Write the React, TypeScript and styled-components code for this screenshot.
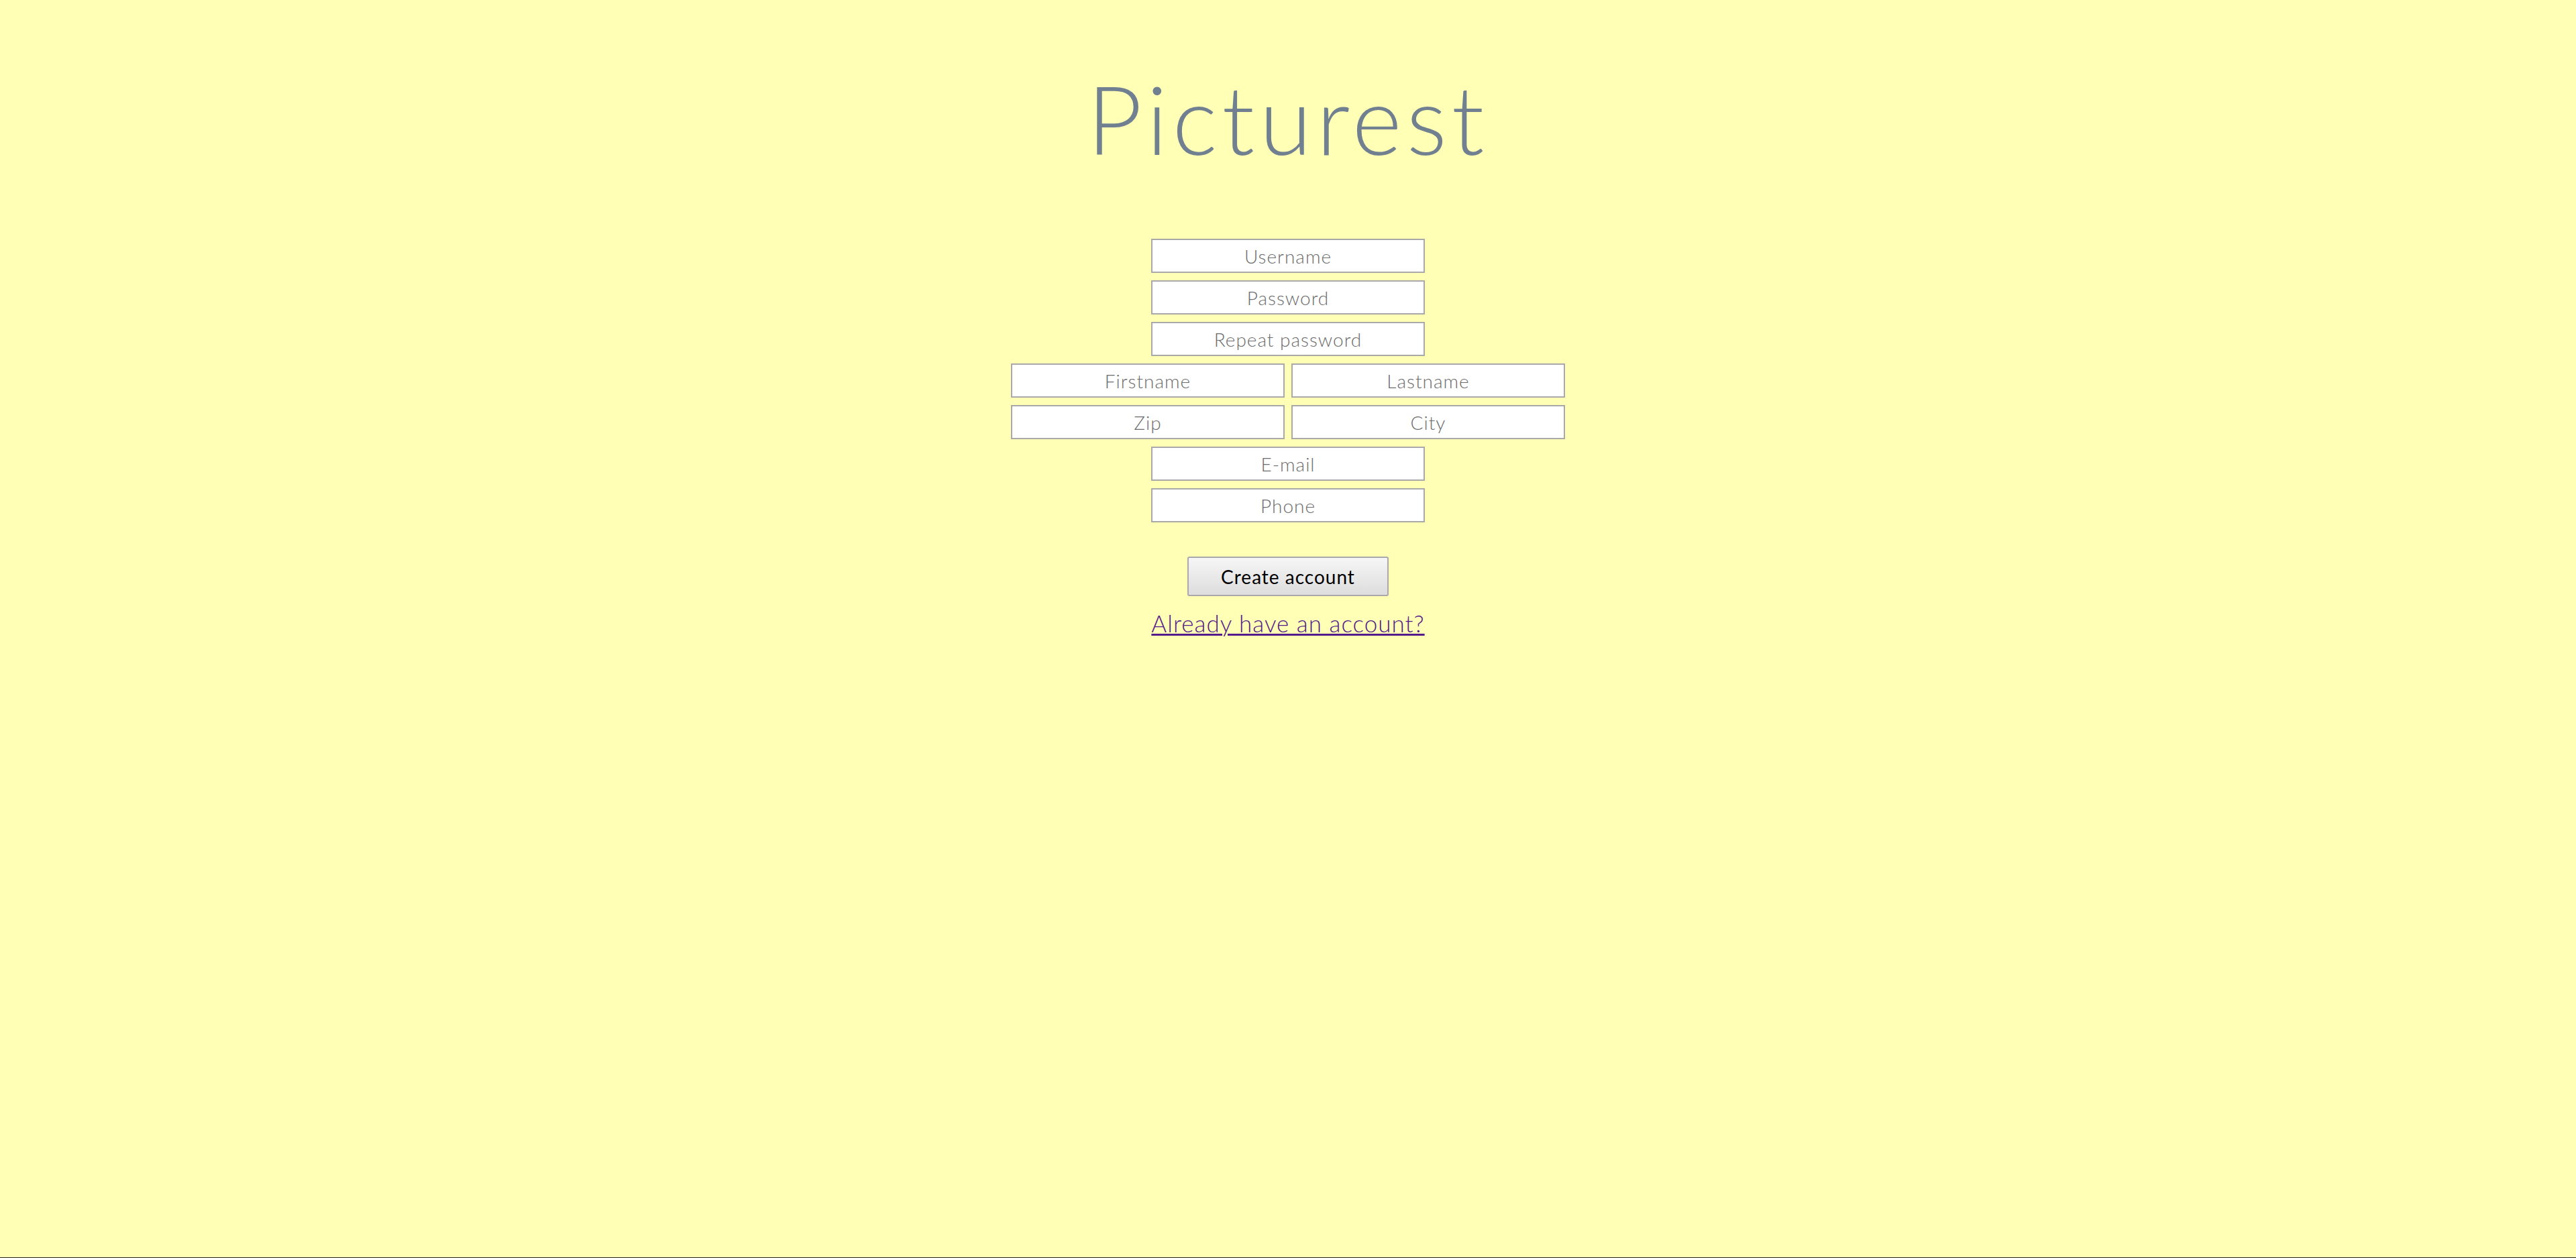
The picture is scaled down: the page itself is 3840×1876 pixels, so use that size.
import styled, { createGlobalStyle } from 'styled-components';

const GlobalStyle = createGlobalStyle`
  html, body {
    margin: 0;
    padding: 0;
    background-color: #ffffb5;
    font-family: Lato, "Open Sans", sans-serif;
  }
`;

const Page = styled.div`
  min-height: 100vh;
  box-sizing: border-box;
  border-bottom: 1px solid #222;
  display: flex;
  flex-direction: column;
  align-items: center;
  padding-top: 91px;
`;

const Title = styled.h1`
  margin: 0;
  font-size: 142px;
  line-height: 170px;
  font-weight: 300;
  color: slategray;
  letter-spacing: 7px;
`;

const Form = styled.form`
  margin-top: 95px;
  display: flex;
  flex-direction: column;
  align-items: center;
  gap: 11px;
`;

const Row = styled.div`
  display: flex;
  gap: 10px;
`;

const Input = styled.input`
  width: 408px;
  height: 51px;
  box-sizing: border-box;
  border: 2px solid #a9a9a9;
  background: #fff;
  text-align: center;
  font-family: Lato, "Open Sans", sans-serif;
  font-weight: 300;
  font-size: 28px;
  letter-spacing: 1px;
  color: #333;
  outline: none;

  &::placeholder {
    color: #6c6c6c;
  }
`;

const Button = styled.button`
  margin-top: 40px;
  width: 300px;
  height: 59px;
  border: 2px solid #a9a9a9;
  border-radius: 3px;
  background: linear-gradient(#f6f6f6, #dddddd);
  font-family: Lato, "Open Sans", sans-serif;
  font-size: 28px;
  font-weight: 400;
  letter-spacing: 1px;
  color: #000;
  cursor: pointer;
`;

const LoginLink = styled.a`
  margin-top: 8px;
  font-size: 35px;
  font-weight: 300;
  letter-spacing: 1px;
  color: #551a8b;
  text-decoration: underline;
  text-decoration-thickness: 3px;
`;

const App = () => {
  return (
    <Page>
      <GlobalStyle />
      <Title>Picturest</Title>
      <Form onSubmit={e => e.preventDefault()}>
        <Input type="text" placeholder="Username" />
        <Input type="password" placeholder="Password" />
        <Input type="password" placeholder="Repeat password" />
        <Row>
          <Input type="text" placeholder="Firstname" />
          <Input type="text" placeholder="Lastname" />
        </Row>
        <Row>
          <Input type="text" placeholder="Zip" />
          <Input type="text" placeholder="City" />
        </Row>
        <Input type="email" placeholder="E-mail" />
        <Input type="tel" placeholder="Phone" />
        <Button type="submit">Create account</Button>
        <LoginLink href="#login">Already have an account?</LoginLink>
      </Form>
    </Page>
  );
};

export default App;
